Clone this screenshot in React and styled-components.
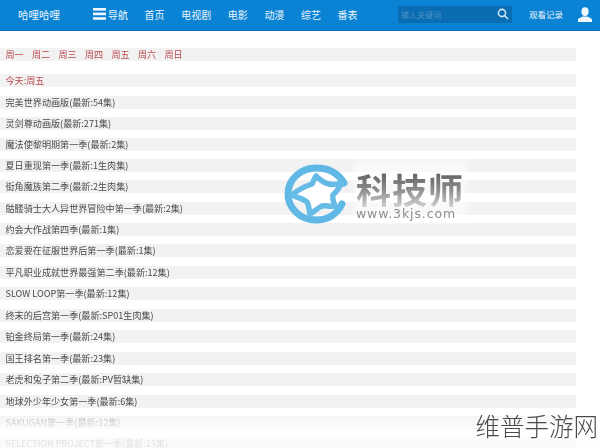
import React from "react";
import styled, { createGlobalStyle } from "styled-components";

const Global = createGlobalStyle`
  html, body { margin: 0; padding: 0; background: #fff; }
  body { font-family: "Liberation Sans", "Noto Sans CJK SC", sans-serif; }
`;
const Page = styled.div`
  position: relative; width: 600px; height: 448px; overflow: hidden; background: #fff;
`;
const Soft = styled.div`
  filter: blur(0.45px);
`;
const Header = styled.header`
  height: 30px; background: #0b83d4; border-bottom: 1px solid #0a6fb6;
  display: flex; align-items: center; color: #eaf5fc; font-size: 10.5px; box-sizing: content-box;
`;
const Logo = styled.div`
  margin-left: 18px; width: 75px; font-size: 10.5px; white-space: nowrap; padding-bottom: 2px;
`;
const Nav = styled.nav`
  display: flex; align-items: center; gap: 16.6px; width: 305px; padding-bottom: 2px;
`;
const NavItem = styled.span`
  display: flex; align-items: center; gap: 2px; font-size: 10px; white-space: nowrap;
  font-family: "Noto Sans CJK SC", sans-serif;
`;
const Burger = styled.svg`
  width: 13px; height: 12px; display: block;
`;
const Search = styled.div`
  width: 114px; height: 17px; background: #0a6cb2; display: flex; align-items: center;
  justify-content: space-between; padding: 0 3px 0 3px; box-sizing: border-box; margin-bottom: 2px;
`;
const Placeholder = styled.span`
  font-size: 8px; color: #4c93c4; font-family: "Noto Sans CJK SC", sans-serif;
`;
const History = styled.span`
  margin-left: 17px; font-size: 8.5px; width: 49px; white-space: nowrap; padding-bottom: 2px;
  font-family: "Noto Sans CJK SC", sans-serif;
`;
const List = styled.main`
  padding-top: 17px; width: 576px; display: flex; flex-direction: column;
`;
const Bar = styled.div`
  height: 13px; background: #f2f2f2; display: flex; align-items: center; padding-left: 5.5px; gap: 8.3px;
  font-size: 9.1px; line-height: 13px; white-space: nowrap;
  font-family: "Noto Sans CJK SC", sans-serif;
  color: ${p => (p.$red ? "#b8474c" : p.$muted ? "#a0a0a0" : "#4a4a4a")};
  margin-bottom: ${p => p.$gap}px;
`;
const Fade = styled.div`
  position: absolute; left: 0; right: 0; bottom: 0; height: 38px;
  background: linear-gradient(to bottom, rgba(255,255,255,0), rgba(255,255,255,.65) 40%, rgba(255,255,255,.7));
`;
const Mark = styled.div`
  position: absolute; left: 284px; top: 164px; display: flex; align-items: flex-start; gap: 6px;
`;
const MarkGlyph = styled.svg`
  width: 66px; height: 60px; display: block;
`;
const MarkText = styled.div`
  display: flex; flex-direction: column; align-items: flex-start; padding-top: 7px;
  background: rgba(255,255,255,.55); box-shadow: 0 0 7px 3px rgba(255,255,255,.55);
`;
const MarkTitle = styled.div`
  font-family: "Noto Sans CJK SC", sans-serif; font-weight: 700; font-size: 35px; line-height: 36px;
  letter-spacing: 1px; background: linear-gradient(to bottom, #5f5f5f, #8a8a8a 50%, #d0d0d0);
  -webkit-background-clip: text; background-clip: text; color: transparent;
`;
const MarkUrl = styled.div`
  font-family: "DejaVu Sans", sans-serif; font-size: 12.5px; line-height: 13px; color: #8d8d8d; letter-spacing: .9px;
`;
const Stamp = styled.div`
  position: absolute; right: 2px; bottom: 7px; font-family: "Noto Sans CJK SC", sans-serif; font-weight: 300;
  font-size: 24.5px; line-height: 30px; color: #4a4a4a; white-space: nowrap;
`;

const days = ["周一", "周二", "周三", "周四", "周五", "周六", "周日"];
const shows = [
  ["完美世界动画版(最新:54集)", 8], ["灵剑尊动画版(最新:271集)", 8], ["魔法使黎明期第一季(最新:2集)", 8],
  ["夏日重现第一季(最新:1生肉集)", 8], ["街角魔族第二季(最新:2生肉集)", 9], ["骷髅骑士大人异世界冒险中第一季(最新:2集)", 8],
  ["约会大作战第四季(最新:1集)", 8], ["恋爱要在征服世界后第一季(最新:1集)", 9], ["平凡职业成就世界最强第二季(最新:12集)", 8],
  ["SLOW LOOP第一季(最新:12集)", 9], ["终末的后宫第一季(最新:SP01生肉集)", 8], ["铂金终局第一季(最新:24集)", 9],
  ["国王排名第一季(最新:23集)", 8], ["老虎和兔子第二季(最新:PV暂缺集)", 9], ["地球外少年少女第一季(最新:6集)", 8],
  ["SAKUGAN第一季(最新:12集)", 8], ["SELECTION PROJECT第一季(最新:13集)", 8],
];

export default function App() {
  return (
    <Page>
      <Global />
      <Soft>
        <Header>
          <Logo>哈哩哈哩</Logo>
          <Nav>
            <NavItem>
              <Burger viewBox="0 0 13 12" fill="#eef7fd"><rect y="0" width="13" height="2.6" /><rect y="4.6" width="13" height="2.6" /><rect y="9.2" width="13" height="2.6" /></Burger>
              导航
            </NavItem>
            <NavItem>首页</NavItem>
            <NavItem>电视剧</NavItem>
            <NavItem>电影</NavItem>
            <NavItem>动漫</NavItem>
            <NavItem>综艺</NavItem>
            <NavItem>番表</NavItem>
          </Nav>
          <Search>
            <Placeholder>输入关键词</Placeholder>
            <svg width="12" height="12" viewBox="0 0 12 12" fill="none" stroke="#cfe6f5" strokeWidth="1.6"><circle cx="5" cy="5" r="3.6" /><path d="M7.7 7.7 11 11" /></svg>
          </Search>
          <History>观看记录</History>
          <svg width="14" height="15" viewBox="0 0 14 15" fill="#eef7fd" style={{ marginBottom: 2 }}><ellipse cx="7" cy="4.6" rx="3.6" ry="4.4" /><path d="M0 15v-2c0-1.6 3-2.6 5-3.4h4c2 .8 5 1.8 5 3.4v2z" /></svg>
        </Header>
        <List>
          <Bar $red $gap={13}>{days.map(d => <span key={d}>{d}</span>)}</Bar>
          <Bar $red $gap={9}>今天:周五</Bar>
          {shows.map(([t, g], i) => <Bar key={t} $gap={g} $muted={i > 14}>{t}</Bar>)}
        </List>
      </Soft>
      <Fade />
      <Mark>
        <MarkGlyph viewBox="0 0 66 60">
          <path d="M60 19C54 9 44 4 32 4 16 4 4 16 4 30s12 26 28 26c12 0 21-6 26-16" fill="none" stroke="#5fb8e6" strokeWidth="7" strokeLinecap="round" />
          <path d="M8 31C16 24 22 22 28 20c2-4 3-7 4-8 3 3 8 7 13 8 4 1 9 0 12-1-1 5-5 9-8 12-1 4 1 8 2 11-5 1-9-1-13 0-3 1-8 6-12 8-1-4-1-9-3-12-3-3-9-4-15-7z" fill="#fff" stroke="#66bbe7" strokeWidth="5.5" strokeLinejoin="round" />
          <path d="M32 12c3 3 8 7 13 8" fill="none" stroke="#5fb8e6" strokeWidth="3" strokeLinecap="round" />
        </MarkGlyph>
        <MarkText>
          <MarkTitle>科技师</MarkTitle>
          <MarkUrl>www.3kjs.com</MarkUrl>
        </MarkText>
      </Mark>
      <Stamp>维普手游网</Stamp>
    </Page>
  );
}
